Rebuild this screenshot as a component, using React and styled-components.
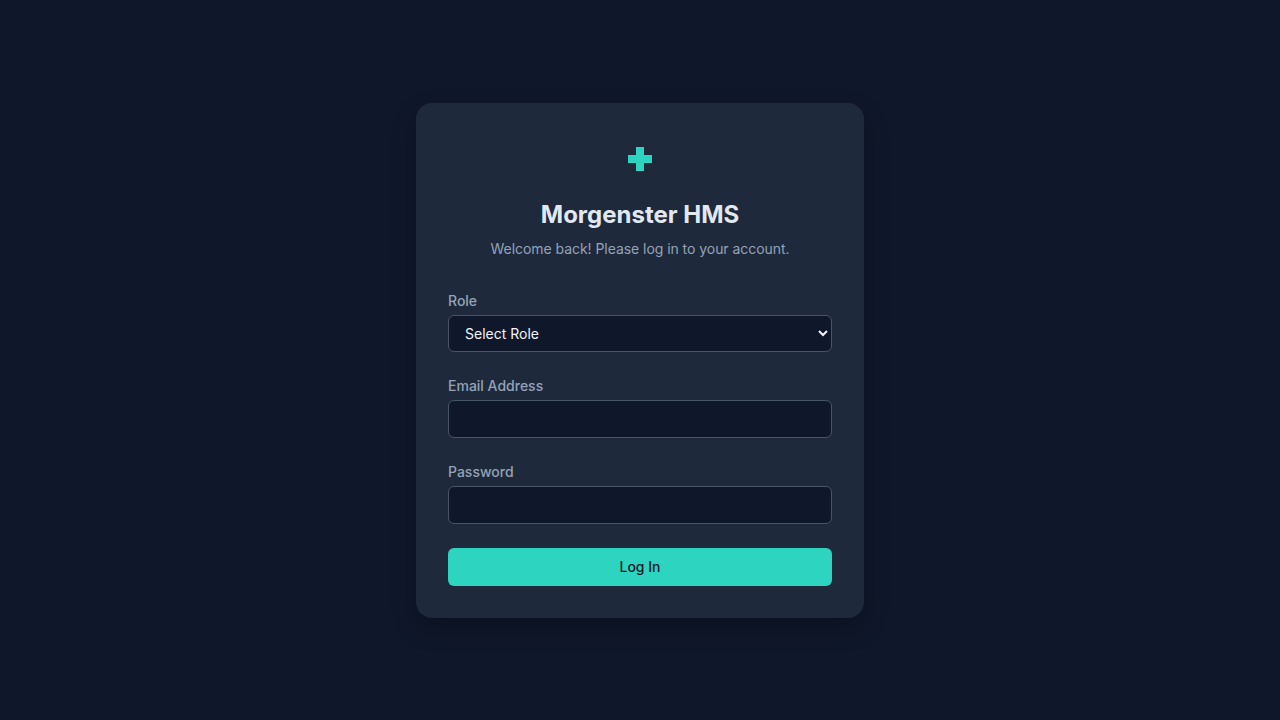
import React from "react";
import styled, { createGlobalStyle } from "styled-components";

const GlobalStyle = createGlobalStyle`
  * {
    box-sizing: border-box;
  }

  html,
  body {
    margin: 0;
    padding: 0;
    background-color: #0f172a;
    font-family: Inter, "Noto Sans", sans-serif;
  }
`;

const Page = styled.div`
  min-height: 100vh;
  display: flex;
  justify-content: center;
  align-items: center;
`;

const Card = styled.div`
  width: 448px;
  padding: 32px;
  background-color: #1e293b;
  border-radius: 16px;
  box-shadow: 0 10px 25px rgba(0, 0, 0, 0.25);
`;

const Header = styled.div`
  display: flex;
  flex-direction: column;
  align-items: center;
  text-align: center;
  margin-bottom: 32px;
`;

const IconWrap = styled.div`
  height: 48px;
  display: flex;
  align-items: center;
  justify-content: center;
  margin-bottom: 17px;
`;

const Title = styled.h1`
  margin: 0 0 8px;
  font-size: 24px;
  line-height: 30px;
  font-weight: 700;
  color: #e2e8f0;
`;

const Subtitle = styled.p`
  margin: 0;
  font-size: 14px;
  line-height: 21px;
  color: #94a3b8;
  letter-spacing: -0.05px;
`;

const Form = styled.form`
  display: flex;
  flex-direction: column;
  gap: 24px;
`;

const Field = styled.div`
  display: flex;
  flex-direction: column;
  gap: 4px;
`;

const Label = styled.label`
  font-size: 14px;
  line-height: 20px;
  font-weight: 500;
  color: #94a3b8;
`;

const Input = styled.input`
  width: 100%;
  height: 38px;
  padding: 0 12px;
  background-color: #0f172a;
  border: 1px solid #475569;
  border-radius: 6px;
  color: #e2e8f0;
  font-family: inherit;
  font-size: 14px;
  outline: none;
`;

const Select = styled.select`
  width: 100%;
  height: 37px;
  padding: 0 12px;
  background-color: #0f172a;
  border: 1px solid #475569;
  border-radius: 6px;
  color: #f1f5f9;
  color-scheme: dark;
  font-family: inherit;
  font-size: 14px;
  outline: none;
`;

const Button = styled.button`
  height: 38px;
  border: none;
  border-radius: 6px;
  background-color: #2dd4bf;
  color: #0f172a;
  font-family: inherit;
  font-size: 14px;
  font-weight: 500;
  cursor: pointer;
`;

const CrossIcon = () => (
  <svg width="24" height="24" viewBox="0 0 24 24">
    <path d="M8 0h8v8h8v8h-8v8H8v-8H0V8h8z" fill="#2dd4bf" />
  </svg>
);

const App = () => {
  return (
    <Page>
      <GlobalStyle />
      <Card>
        <Header>
          <IconWrap>
            <CrossIcon />
          </IconWrap>
          <Title>Morgenster HMS</Title>
          <Subtitle>Welcome back! Please log in to your account.</Subtitle>
        </Header>
        <Form onSubmit={(e) => e.preventDefault()}>
          <Field>
            <Label htmlFor="role">Role</Label>
            <Select id="role" defaultValue="">
              <option value="">Select Role</option>
              <option value="doctor">Doctor</option>
              <option value="nurse">Nurse</option>
              <option value="admin">Admin</option>
            </Select>
          </Field>
          <Field>
            <Label htmlFor="email">Email Address</Label>
            <Input id="email" type="email" />
          </Field>
          <Field>
            <Label htmlFor="password">Password</Label>
            <Input id="password" type="password" />
          </Field>
          <Button type="submit">Log In</Button>
        </Form>
      </Card>
    </Page>
  );
};

export default App;
